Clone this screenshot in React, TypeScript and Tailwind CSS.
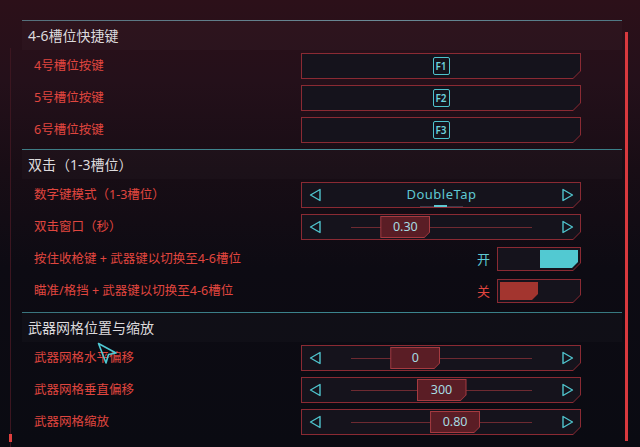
import React from 'react'

const CUT8 = '[clip-path:polygon(0_0,100%_0,100%_calc(100%_-_8px),calc(100%_-_8px)_100%,0_100%)]'
const CUT7 = '[clip-path:polygon(0_0,100%_0,100%_calc(100%_-_7px),calc(100%_-_7px)_100%,0_100%)]'
const CUT6 = '[clip-path:polygon(0_0,100%_0,100%_calc(100%_-_6px),calc(100%_-_6px)_100%,0_100%)]'
const CUT5 = '[clip-path:polygon(0_0,100%_0,100%_calc(100%_-_5px),calc(100%_-_5px)_100%,0_100%)]'

type Row =
  | { kind: 'key'; label: string; key: string }
  | { kind: 'select'; label: string; value: string }
  | { kind: 'slider'; label: string; value: string; pos: number }
  | { kind: 'toggle'; label: string; on: boolean }

const SECTIONS: { title: string; line: string; rows: Row[] }[] = [
  {
    title: '4-6槽位快捷键',
    line: 'bg-[linear-gradient(90deg,#55707c,#6b8a96_60%,#4f7884)]',
    rows: [
      { kind: 'key', label: '4号槽位按键', key: 'F1' },
      { kind: 'key', label: '5号槽位按键', key: 'F2' },
      { kind: 'key', label: '6号槽位按键', key: 'F3' },
    ],
  },
  {
    title: '双击（1-3槽位）',
    line: 'bg-[linear-gradient(90deg,#3e7b84,#3f8c95_60%,#3a7f88)]',
    rows: [
      { kind: 'select', label: '数字键模式（1-3槽位）', value: 'DoubleTap' },
      { kind: 'slider', label: '双击窗口（秒）', value: '0.30', pos: 0.3 },
      { kind: 'toggle', label: '按住收枪键 + 武器键以切换至4-6槽位', on: true },
      { kind: 'toggle', label: '瞄准/格挡 + 武器键以切换至4-6槽位', on: false },
    ],
  },
  {
    title: '武器网格位置与缩放',
    line: 'bg-[linear-gradient(90deg,#3a757e,#3c8790_60%,#37787f)]',
    rows: [
      { kind: 'slider', label: '武器网格水平偏移', value: '0', pos: 0.355 },
      { kind: 'slider', label: '武器网格垂直偏移', value: '300', pos: 0.5 },
      { kind: 'slider', label: '武器网格缩放', value: '0.80', pos: 0.575 },
    ],
  },
]

function Frame({ children, className = '' }: { children: React.ReactNode; className?: string }) {
  return (
    <div className={`p-px bg-[#8a2a33] ${CUT8} ${className}`}>
      <div className={`relative h-full w-full bg-[#15131c] ${CUT7}`}>{children}</div>
    </div>
  )
}

function ArrowLeft() {
  return (
    <svg width="13" height="14" viewBox="0 0 13 14" className="shrink-0">
      <path d="M11 1.5 L1.5 7 L11 12.5 Z" fill="none" stroke="#4fc3cc" strokeWidth="1.4" strokeLinejoin="round" />
    </svg>
  )
}

function ArrowRight() {
  return (
    <svg width="13" height="14" viewBox="0 0 13 14" className="shrink-0">
      <path d="M2 1.5 L11.5 7 L2 12.5 Z" fill="none" stroke="#4fc3cc" strokeWidth="1.4" strokeLinejoin="round" />
    </svg>
  )
}

function Control({ row }: { row: Row }) {
  if (row.kind === 'key') {
    return (
      <Frame className="h-[26px] w-[280px]">
        <div className="flex h-full items-center justify-center">
          <span className="flex h-[18px] w-[17px] items-center justify-center rounded-[2px] border border-[#4fc3cc] text-[10px] font-semibold leading-none text-[#6fd3dc]">
            {row.key}
          </span>
        </div>
      </Frame>
    )
  }
  if (row.kind === 'select') {
    return (
      <Frame className="h-[26px] w-[280px]">
        <div className="flex h-full items-center justify-between pl-[7px] pr-[6px]">
          <ArrowLeft />
          <div className="flex flex-col items-center pt-[5px]">
            <span className="text-[13px] leading-none tracking-[0.5px] text-[#5fc9d2]">{row.value}</span>
            <div className="mt-[4px] flex items-center">
              <span className="h-px w-[14px] bg-[#3a3a48]" />
              <span className="h-[2px] w-[13px] bg-[#5fc9d2]" />
              <span className="h-px w-[16px] bg-[#3a3a48]" />
            </div>
          </div>
          <ArrowRight />
        </div>
      </Frame>
    )
  }
  if (row.kind === 'slider') {
    return (
      <Frame className="h-[26px] w-[280px]">
        <div className="flex h-full items-center justify-between pl-[7px] pr-[6px]">
          <ArrowLeft />
          <div className="relative h-full w-[181px]">
            <div className="absolute left-0 right-0 top-1/2 h-px bg-[#6e2a31]" />
            <div
              className={`absolute top-[1px] h-[22px] w-[50px] -translate-x-1/2 bg-[#a53a40] p-px ${CUT6}`}
              style={{ left: `${row.pos * 100}%` }}
            >
              <div className={`flex h-full w-full items-center justify-center bg-[#5a1d25] ${CUT5}`}>
                <span className="text-[12.5px] leading-none text-[#a6dce2]">{row.value}</span>
              </div>
            </div>
          </div>
          <ArrowRight />
        </div>
      </Frame>
    )
  }
  return (
    <div className="flex w-[280px] items-center justify-end gap-[7px]">
      <span className={`text-[13px] leading-none ${row.on ? 'text-[#5fc9d2]' : 'text-[#e0463f]'}`}>{row.on ? '开' : '关'}</span>
      <Frame className="h-[24px] w-[84px]">
        <div className={`flex h-full p-[2px] ${row.on ? 'justify-end' : 'justify-start'}`}>
          <div className={`h-full w-[38px] ${CUT6} ${row.on ? 'bg-[#52c9d2]' : 'bg-[#a3352f]'}`} />
        </div>
      </Frame>
    </div>
  )
}

export default function App() {
  return (
    <div className="relative flex h-[447px] w-[640px] overflow-hidden bg-[linear-gradient(180deg,#2c1019_0%,#24101a_18%,#180d15_38%,#0d0b13_60%,#0a0b12_100%)] font-['Noto_Sans','Noto_Sans_CJK_SC',sans-serif]">
      {/* left gutter line */}
      <div className="flex w-[22px] flex-col pl-[9px]">
        <div className="ml-px mt-[48px] w-px flex-1 bg-[#3c1620]" />
        <div className="h-[8px] w-[3px] bg-[#e0403e]" />
        <div className="ml-px h-[5px] w-px bg-[#3c1620]" />
      </div>

      {/* settings panel */}
      <div className="flex w-[600px] flex-col pt-[20px]">
        {SECTIONS.map((s, si) => (
          <section key={s.title} className={si === 0 ? 'pb-[3px]' : 'pb-[5px]'}>
            <div className={`h-px w-full ${s.line}`} />
            <div className="flex h-[29px] items-center bg-white/[0.02] pl-[6px] text-[14px] text-[#dcdadc]">
              {s.title}
            </div>
            {s.rows.map((row) => (
              <div key={row.label} className="flex h-8 items-center pl-[12px] pr-[41px]">
                <span className="flex-1 text-[12.5px] text-[#e0463f]">{row.label}</span>
                <Control row={row} />
              </div>
            ))}
          </section>
        ))}
      </div>

      {/* scrollbar */}
      <div className="flex w-[18px] flex-col pl-[3px]">
        <div className="mb-[6px] mt-[32px] w-[3px] flex-1 bg-[#d8393e]" />
      </div>

      {/* mouse cursor */}
      <svg className="absolute left-[97px] top-[342px]" width="22" height="24" viewBox="0 0 22 24">
        <path d="M1.5 1.5 L19 11 L11.5 12.5 L9 21 Z" fill="none" stroke="#4fc8d2" strokeWidth="1.6" strokeLinejoin="round" />
      </svg>
    </div>
  )
}
